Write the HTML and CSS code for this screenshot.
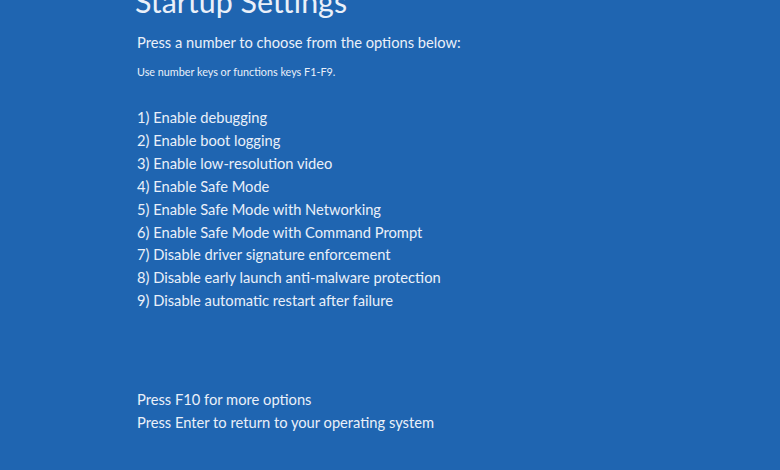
FILE: index.html
```html
<!DOCTYPE html>
<html lang="en">
<head>
    <meta charset="UTF-8">
    <title>Startup Settings</title>
    <link rel="stylesheet" href="styles.css">
</head>
<body>
    <main class="screen">
        <h1 class="title">Startup Settings</h1>
        <p class="prompt">Press a number to choose from the options below:</p>
        <p class="hint">Use number keys or functions keys F1-F9.</p>

        <ol class="options">
            <li>1) Enable debugging</li>
            <li>2) Enable boot logging</li>
            <li>3) Enable low-resolution video</li>
            <li>4) Enable Safe Mode</li>
            <li>5) Enable Safe Mode with Networking</li>
            <li>6) Enable Safe Mode with Command Prompt</li>
            <li>7) Disable driver signature enforcement</li>
            <li>8) Disable early launch anti-malware protection</li>
            <li>9) Disable automatic restart after failure</li>
        </ol>

        <div class="footer">
            <p>Press F10 for more options</p>
            <p>Press Enter to return to your operating system</p>
        </div>
    </main>
</body>
</html>
```

FILE: styles.css
```css
* {
    margin: 0;
    padding: 0;
    box-sizing: border-box;
}

body {
    font-family: Lato, "Open Sans", sans-serif;
    background: #1f65b1;
    color: #eaf0f9;
    overflow: hidden;
}

.screen {
    padding-left: 137px;
    margin-top: -17px;
}

.title {
    font-size: 30.4px;
    font-weight: 400;
    line-height: 36px;
    margin-left: -2px;
}

.prompt {
    font-size: 14.7px;
    line-height: 23px;
    margin-top: 12px;
}

.hint {
    font-size: 10.8px;
    line-height: 14px;
    margin-top: 11px;
}

.options {
    list-style: none;
    margin-top: 27px;
    font-size: 14.7px;
    line-height: 22.9px;
}

.footer {
    margin-top: 76px;
    font-size: 14.7px;
    line-height: 23px;
}
```
